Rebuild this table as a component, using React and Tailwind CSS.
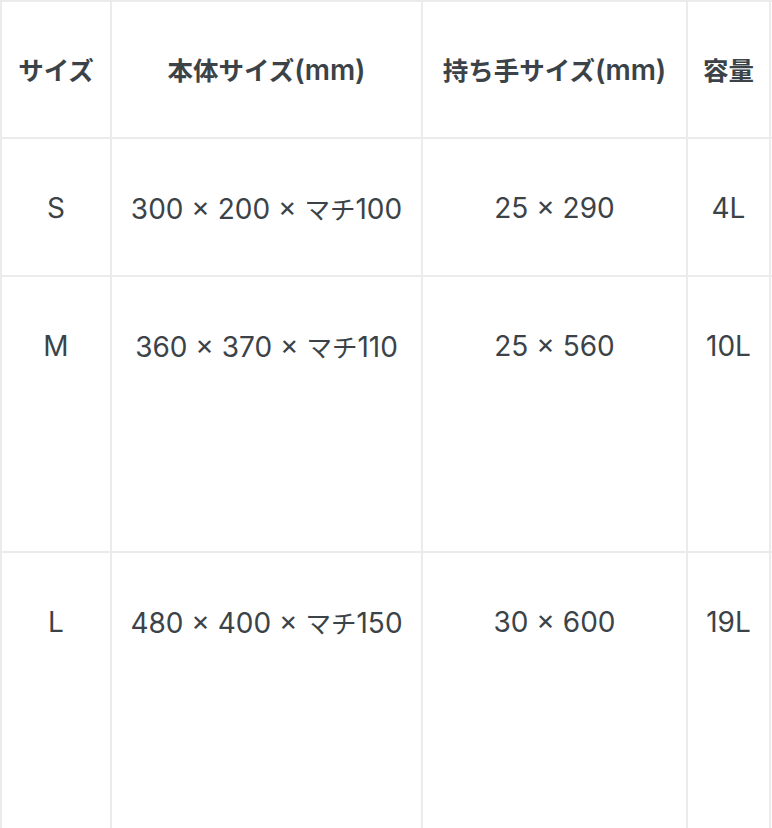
const HEAD = ["サイズ", "本体サイズ(mm)", "持ち手サイズ(mm)", "容量", ""];

const ROWS = [
  { size: "S", body: "300 × 200 × マチ100", handle: "25 × 290", vol: "4L", h: "h-[138px]" },
  { size: "M", body: "360 × 370 × マチ110", handle: "25 × 560", vol: "10L", h: "h-[276px]" },
  { size: "L", body: "480 × 400 × マチ150", handle: "30 × 600", vol: "19L", h: "h-[300px]" },
];

// latin glyphs render a bit larger than the kana/kanji in the reference
function Mixed({ text }) {
  return text.split(/([\u3000-\u9fff]+)/).map((part, i) =>
    /[\u3000-\u9fff]/.test(part) ? (
      <span key={i} className="text-[25.5px]" style={{ fontFamily: '"Noto Sans CJK JP", sans-serif' }}>
        {part}
      </span>
    ) : (
      <span key={i}>{part}</span>
    )
  );
}

function Cell({ children, head, h }) {
  return (
    <div
      className={`border-r-2 border-b-2 border-[#ebebeb] px-2 text-center whitespace-nowrap overflow-hidden ${
        head ? "font-semibold flex items-center justify-center h-[137px] pb-[1px]" : `pt-[51px] ${h}`
      }`}
    >
      <div>
        <Mixed text={children} />
      </div>
    </div>
  );
}

export default function App() {
  return (
    <div className="w-[772px] h-[828px] overflow-hidden bg-white">
      <div
        className="grid grid-cols-[110px_311px_265px_83px_240px] w-max border-l-2 border-t-2 border-[#ebebeb] text-[28px] leading-[36px] text-[#3c4348]"
        style={{ fontFamily: '"Inter", "Noto Sans CJK JP", sans-serif' }}
      >
        {HEAD.map((t, i) => (
          <Cell key={i} head>{t}</Cell>
        ))}
        {ROWS.map((r) => (
          <div key={r.size} className="contents">
            <Cell h={r.h}>{r.size}</Cell>
            <Cell h={r.h}>{r.body}</Cell>
            <Cell h={r.h}>{r.handle}</Cell>
            <Cell h={r.h}>{r.vol}</Cell>
            <Cell h={r.h}>{""}</Cell>
          </div>
        ))}
      </div>
    </div>
  );
}
